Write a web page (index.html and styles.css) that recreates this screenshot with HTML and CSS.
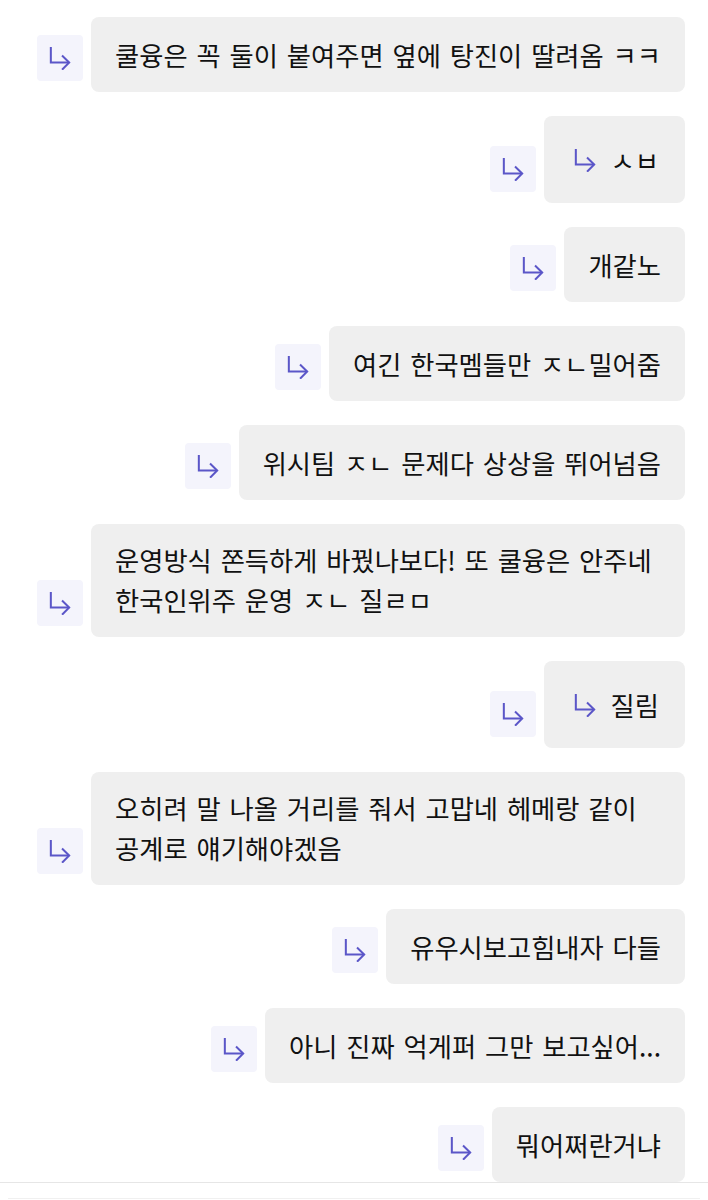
FILE: index.html
```html
<!DOCTYPE html>
<html lang="ko">
<head>
<meta charset="utf-8">
<link rel="stylesheet" href="styles.css">
</head>
<body>
<svg width="0" height="0" class="defs">
  <defs>
    <symbol id="arrow" viewBox="0 0 24 26">
      <path d="M2 1V18H22" fill="none" stroke="currentColor" stroke-width="2.2" stroke-linejoin="miter"/>
      <path d="M15 11L22 18L15 25" fill="none" stroke="currentColor" stroke-width="2.2" stroke-linejoin="miter" stroke-linecap="square"/>
    </symbol>
  </defs>
</svg>
<main class="thread">
  <div class="row">
    <span class="icon"><svg class="arr"><use href="#arrow"/></svg></span>
    <div class="bubble">쿨융은 꼭 둘이 붙여주면 옆에 탕진이 딸려옴 ㅋㅋ</div>
  </div>
  <div class="row">
    <span class="icon"><svg class="arr"><use href="#arrow"/></svg></span>
    <div class="bubble reply"><span class="inner"><svg class="arr"><use href="#arrow"/></svg></span>ㅅㅂ</div>
  </div>
  <div class="row">
    <span class="icon"><svg class="arr"><use href="#arrow"/></svg></span>
    <div class="bubble">개같노</div>
  </div>
  <div class="row">
    <span class="icon"><svg class="arr"><use href="#arrow"/></svg></span>
    <div class="bubble">여긴 한국멤들만 ㅈㄴ밀어줌</div>
  </div>
  <div class="row">
    <span class="icon"><svg class="arr"><use href="#arrow"/></svg></span>
    <div class="bubble">위시팀 ㅈㄴ 문제다 상상을 뛰어넘음</div>
  </div>
  <div class="row">
    <span class="icon"><svg class="arr"><use href="#arrow"/></svg></span>
    <div class="bubble wide">운영방식 쫀득하게 바꿨나보다! 또 쿨융은 안주네<br>한국인위주 운영 ㅈㄴ 질ㄹㅁ</div>
  </div>
  <div class="row">
    <span class="icon"><svg class="arr"><use href="#arrow"/></svg></span>
    <div class="bubble reply"><span class="inner"><svg class="arr"><use href="#arrow"/></svg></span>질림</div>
  </div>
  <div class="row">
    <span class="icon"><svg class="arr"><use href="#arrow"/></svg></span>
    <div class="bubble wide">오히려 말 나올 거리를 줘서 고맙네 헤메랑 같이<br>공계로 얘기해야겠음</div>
  </div>
  <div class="row">
    <span class="icon"><svg class="arr"><use href="#arrow"/></svg></span>
    <div class="bubble">유우시보고힘내자 다들</div>
  </div>
  <div class="row">
    <span class="icon"><svg class="arr"><use href="#arrow"/></svg></span>
    <div class="bubble">아니 진짜 억게퍼 그만 보고싶어...</div>
  </div>
  <div class="row last">
    <span class="icon"><svg class="arr"><use href="#arrow"/></svg></span>
    <div class="bubble">뭐어쩌란거냐</div>
  </div>
</main>
<footer class="bottom"><div class="bottom-line"></div></footer>
</body>
</html>
```

FILE: styles.css
```css
html, body {
  margin: 0;
  padding: 0;
  background: #ffffff;
}
body {
  font-family: "Noto Sans CJK KR", "Noto Sans", sans-serif;
  color: #111111;
  width: 708px;
  height: 1200px;
  overflow: hidden;
}
.defs {
  position: absolute;
  width: 0;
  height: 0;
}
.thread {
  display: flex;
  flex-direction: column;
  gap: 24px;
  padding: 17px 23px 0 37px;
}
.row {
  display: flex;
  justify-content: flex-end;
  align-items: flex-end;
  gap: 8px;
}
.icon {
  flex: none;
  width: 46px;
  height: 46px;
  margin-bottom: 11px;
  border-radius: 4px;
  background: #f4f4fc;
  color: #5b56c8;
  display: flex;
  align-items: center;
  justify-content: center;
}
.arr {
  width: 22px;
  height: 24px;
  color: #5b56c8;
}
.bubble {
  background: #efefef;
  border-radius: 8px;
  padding: 18px 24px 17px;
  font-size: 26.3px;
  line-height: 40px;
  word-spacing: 1.5px;
  white-space: nowrap;
}
.bubble.wide {
  flex: 1;
  padding: 16px 24px 17px;
}
.bubble.reply {
  display: flex;
  align-items: center;
  height: 53px;
  padding: 17px 26px 17px 30px;
}
.inner {
  display: flex;
  align-items: center;
  margin-right: 15px;
}
.bottom {
  border-top: 1px solid #e6e6e6;
  margin-top: 0;
  padding: 15px 8px 0;
}
.bottom-line {
  border-top: 1px solid #f0f0f0;
}
```
